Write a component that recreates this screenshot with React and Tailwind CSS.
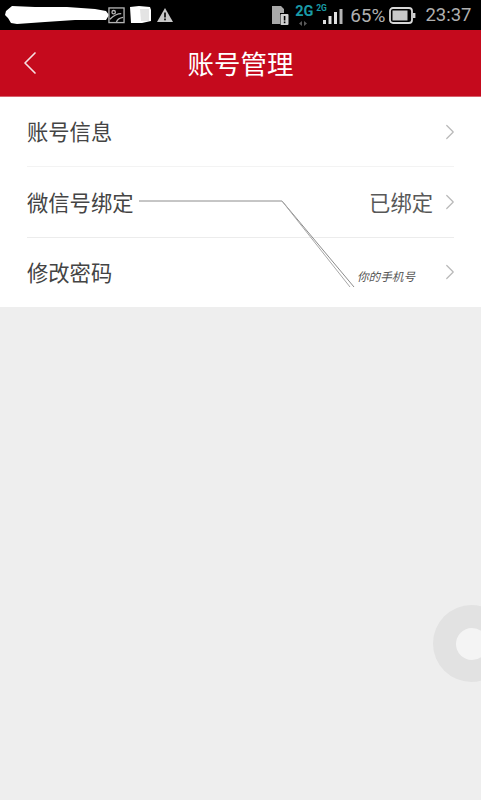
import { ChevronLeft, ChevronRight } from 'lucide-react';

function StatusBar() {
  return (
    <div className="flex h-[30px] items-center justify-between bg-black pl-[5px] pr-[9.5px] font-['Roboto',sans-serif] text-[#b0b0b0]">
      <div className="flex items-center">
        <svg width="105" height="20" viewBox="0 0 105 20" className="shrink-0">
          <path d="M1 6 L7 1 L30 2 L62 2 L90 4 L101 6 L104 10 L101 15 L70 15 L40 17 L12 19 L6 18 L3 13 L0 10 Z" fill="#fff" />
        </svg>
        <svg width="17" height="17" viewBox="0 0 18 18" className="ml-[-2px] shrink-0" fill="none" stroke="#b4b4b4" strokeWidth="1.4">
          <rect x="1" y="1" width="16" height="15.5" />
          <circle cx="6" cy="5.5" r="1.8" />
          <path d="M2 13 Q8 7 14 7 M9 16 Q10 12 16 11" />
        </svg>
        <svg width="22" height="18" viewBox="0 0 22 18" className="ml-[5px] shrink-0">
          <path d="M0 1 L9 0 L20 1 L21 4 L21 15 L12 17 L1 17 Z" fill="#fff" />
          <path d="M10 3 H19 V15 H11 Z" fill="#e4e4e4" />
        </svg>
        <svg width="18" height="16" viewBox="0 0 18 16" className="ml-[4px] shrink-0">
          <path d="M9 1 L17 15 L1 15 Z" fill="#c8c8c8" />
          <rect x="8.2" y="5.5" width="1.6" height="5" fill="#000" />
          <rect x="8.2" y="11.5" width="1.6" height="1.8" fill="#000" />
        </svg>
      </div>
      <div className="flex items-center">
        <svg width="18" height="20" viewBox="0 0 18 20" className="shrink-0">
          <path d="M1 1 H10 L13 4 V8 H9 V19 H1 Z" fill="#a8a8a8" />
          <rect x="9.5" y="9" width="8" height="11" rx="1" fill="#d0d0d0" />
          <rect x="12.8" y="11" width="1.6" height="4.5" fill="#000" />
          <rect x="12.8" y="16.5" width="1.6" height="1.7" fill="#000" />
        </svg>
        <div className="relative ml-[6px] h-[24px] w-[16px]">
          <span className="block text-[14.5px] leading-[17px] font-bold text-[#1a9aa6]">2G</span>
          <svg width="10" height="5" viewBox="0 0 10 5" className="absolute left-[3px] top-[18px]">
            <path d="M4 0 L1 2.5 L4 5 Z M6 0 L9 2.5 L6 5 Z" fill="#5a5a5a" />
          </svg>
        </div>
        <div className="relative ml-[5px] h-[22px] w-[27px]">
          <span className="absolute left-0 top-0 text-[8.5px] leading-[9px] font-bold text-[#1a9aa6]">2G</span>
          <svg width="20" height="15" viewBox="0 0 20 15" className="absolute bottom-[2px] right-0">
            <rect x="0" y="11" width="3" height="4" fill="#e0e0e0" />
            <rect x="5.5" y="7" width="3" height="8" fill="#e0e0e0" />
            <rect x="11" y="3" width="3" height="12" fill="#e0e0e0" />
            <rect x="16.5" y="0" width="3" height="15" fill="#b4b4b4" />
          </svg>
        </div>
        <span className="ml-[7px] text-[19px] leading-none">65%</span>
        <svg width="27" height="17" viewBox="0 0 27 17" className="ml-[4px] shrink-0">
          <rect x="1" y="1" width="22" height="15" rx="3" fill="none" stroke="#d8d8d8" strokeWidth="1.8" />
          <rect x="3.5" y="3.5" width="15" height="10" fill="#c8c8c8" />
          <rect x="24" y="6" width="2.4" height="5" fill="#d0d0d0" />
        </svg>
        <span className="ml-[9px] text-[18.5px] leading-none">23:37</span>
      </div>
    </div>
  );
}

function Row({ label, value }) {
  return (
    <div className="flex flex-1 items-center pl-[27px] pr-[26px]">
      <span className="pt-[5px] text-[21.3px] text-[#444444]">{label}</span>
      <div className="ml-auto flex items-center">
        {value && <span className="mr-[4px] pt-[5px] text-[21.3px] text-[#585858]">{value}</span>}
        <ChevronRight size={26} strokeWidth={1.1} className="mr-[-8px] text-[#b8b8b8]" />
      </div>
    </div>
  );
}

export default function App() {
  return (
    <div className="relative h-[800px] overflow-hidden bg-[#eeeeee] font-['Liberation_Sans','Noto_Sans_CJK_SC',sans-serif]">
      <StatusBar />
      <div className="relative flex h-[67px] items-center justify-center border-b border-b-[#d8606c] bg-[#c50a1d]">
        <ChevronLeft size={40} strokeWidth={1} className="absolute left-[9.5px] text-[#f6dfe1]" />
        <span className="pt-[5px] text-[26.5px] text-white">账号管理</span>
      </div>
      <div className="relative flex h-[210px] flex-col bg-white">
        <Row label="账号信息" />
        <div className="mx-[27px] h-px bg-[#f3f3f3]" />
        <Row label="微信号绑定" value="已绑定" />
        <div className="mx-[27px] h-px bg-[#ececec]" />
        <Row label="修改密码" />

        {/* hand drawn note over the rows */}
        <svg width="230" height="95" viewBox="0 0 230 95" className="absolute left-[135px] top-[98px]" fill="none">
          <path d="M4 6 H147 L219 92" stroke="#8c8c8c" strokeWidth="1" />
          <path d="M147 6 L215 92" stroke="#a8a8a8" strokeWidth="1" />
        </svg>
        <span className="absolute left-[357px] top-[172px] text-[11.6px] leading-[16px] text-[#555555] italic">你的手机号</span>
      </div>

      {/* floating ball at the right edge */}
      <div className="absolute left-[433px] top-[605px] flex h-[77px] w-[77px] items-center justify-center rounded-full bg-[#e2e2e2]">
        <div className="h-[32px] w-[32px] rounded-full bg-[#f4f4f4]" />
      </div>
    </div>
  );
}
